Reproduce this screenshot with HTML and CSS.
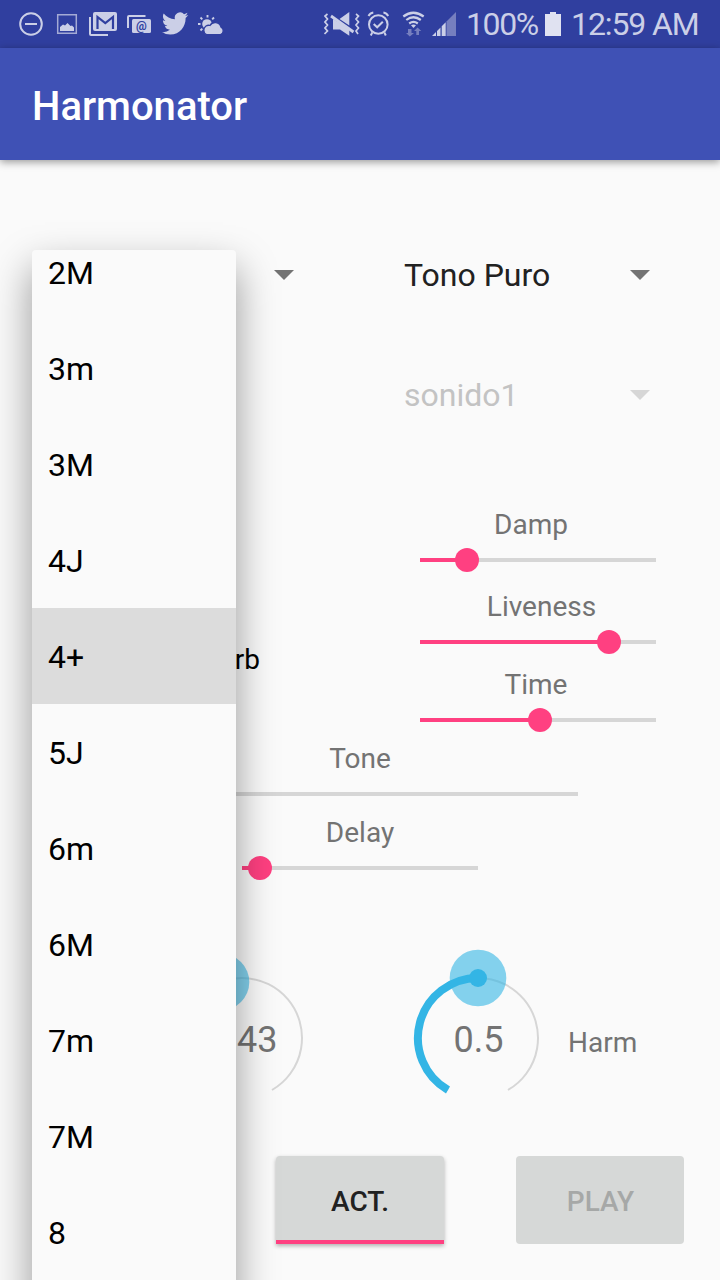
FILE: index.html
```
<!DOCTYPE html>
<html lang="es">
<head>
<meta charset="utf-8">
<title>Harmonator</title>
<link rel="stylesheet" href="styles.css">
</head>
<body>
<div class="screen">
  <div class="status">
    <svg class="icon" viewBox="0 0 36 48"><circle cx="18" cy="24" r="10.8" fill="none" stroke="currentColor" stroke-width="2"/><path d="M12 24h12" stroke="currentColor" stroke-width="2"/></svg>
    <svg class="icon" viewBox="0 0 36 48"><path d="M8.700 14.700h18.600v18.600H8.700z" fill="none" stroke="currentColor" stroke-width="1.500" opacity=".75"/><path d="M11 31v-4l3-2.500 2 1 2.500-2.500 3 3 1.500-.500 2 2V31z" fill="currentColor"/></svg>
    <svg class="icon" viewBox="0 0 36 48"><path d="M5 17v17q0 1 1 1h17" fill="none" stroke="currentColor" stroke-width="2"/><rect x="8" y="12" width="24" height="19" rx="2" fill="currentColor"/><path d="M12.500 29V17l7.800 6.200L28 17v12" fill="none" stroke="#303f9f" stroke-width="2.200"/></svg>
    <svg class="icon" viewBox="0 0 36 48"><path d="M7 28V17q0-1 1-1h16.500" fill="none" stroke="currentColor" stroke-width="2"/><rect x="11" y="19" width="19" height="14" rx="1.500" fill="currentColor"/><text class="at" x="20.500" y="29.800" text-anchor="middle">@</text></svg>
    <svg class="icon" viewBox="0 0 36 48"><path transform="translate(4.900 9.800) scale(1.100 1.140)" fill="currentColor" d="M23.950 4.570a10 10 0 0 1-2.820.780 4.960 4.960 0 0 0 2.160-2.720c-.950.550-2 .950-3.130 1.180a4.920 4.920 0 0 0-8.380 4.480C7.690 8.100 4.070 6.130 1.640 3.160a4.820 4.820 0 0 0-.670 2.480c0 1.710.870 3.210 2.190 4.100a4.900 4.900 0 0 1-2.230-.620v.060a4.920 4.920 0 0 0 3.950 4.830 5 5 0 0 1-2.210.080 4.940 4.940 0 0 0 4.600 3.420A9.870 9.870 0 0 1 0 19.540a13.990 13.990 0 0 0 7.550 2.210c9.050 0 14-7.500 14-13.980 0-.210 0-.420-.020-.630a9.940 9.940 0 0 0 2.460-2.550z"/></svg>
    <svg class="icon" viewBox="0 0 36 48"><circle cx="14" cy="24" r="4.800" fill="currentColor"/><path d="M14.500 15v2.500M7.500 17.500l1.800 1.800M21 17.500l-1.800 1.800M5 24h2.500M7.500 30.500l1.800-1.800" stroke="currentColor" stroke-width="1.900"/><path d="M13.500 34.600a5 5 0 0 1-.500-8.600 5 5 0 0 1 4-.500 6 6 0 0 1 11 1.600 4.100 4.100 0 0 1-.500 7.500z" fill="currentColor" stroke="#303f9f" stroke-width="1.300"/></svg>
    <div class="status-right">
      <svg class="icon" viewBox="0 0 36 48"><path d="M3.500 14l-2.500 2 2.500 3-2.500 3 2.500 3-2.500 3 2.500 3-3 3M32 14l2.500 2-2.500 3 2.500 3-2.500 3 2.500 3-2.500 3 2 3" fill="none" stroke="currentColor" stroke-width="1.700"/><path d="M15.500 19L25.300 12v13.600zM9 19v10.500h7l9.300 6.300V29z" fill="currentColor"/><path d="M7 16l22.500 16" stroke="currentColor" stroke-width="2.800"/></svg>
      <svg class="icon" viewBox="0 0 36 48"><g fill="none" stroke="currentColor" stroke-width="2"><circle cx="18.300" cy="24.500" r="9.300"/><path d="M13.700 24l3.500 3.300 5.600-5.600"/><path d="M8.500 16q1.500-3 4.800-3.400M28.200 16q-1.500-3-4.800-3.400M12.300 32.300l-1.500 3.200M24.300 32.300l1.500 3.200"/></g></svg>
      <svg class="icon" viewBox="0 0 36 48"><g fill="none" stroke="currentColor" stroke-width="2.200"><path d="M7.300 16.500q10-7.500 20.400 0M10.300 20q7.200-5.500 14.500 0M13.200 23.500q4.300-3.200 8.600 0"/></g><path d="M15 25.300q2.500-1.700 5 0l-2.500 2.800z" fill="currentColor"/><path d="M12 29h3.500v4H18l-4.200 3.500L10 33h2zM20.300 35v-4H18l3.500-3.500 3.800 3.500H23v4z" fill="currentColor" opacity=".45"/></svg>
      <svg class="signal" viewBox="0 0 24 48"><path d="M14.500 21.500L24 12v24h-9.500z" fill="currentColor" opacity=".45"/><path d="M0 36l4-4v4zM5 31l3.500-3.500V36H5zM9.700 26.300l4-4V36h-4z" fill="currentColor"/></svg>
      <span class="percent">100%</span>
      <svg class="battery" viewBox="0 0 16 24"><path d="M5 0h6v2h5v22H0V2h5z" fill="#e0e2f1"/></svg>
      <span class="clock">12:59 AM</span>
    </div>
  </div>
  <header class="appbar">Harmonator</header>

  <main class="content">
    <div class="spinners">
      <div class="spinner"><i class="caret"></i></div>
      <div class="spinner wide"><span>Tono Puro</span><i class="caret"></i></div>
      <div class="spinner wide off"><span>sonido1</span><i class="caret"></i></div>
    </div>

    <div class="reverb">
      <label class="check">Reverb</label>
      <div class="params">
        <div class="param"><span class="label damp">Damp</span><div class="track"><div class="fill" style="width:47px"></div></div></div>
        <div class="param"><span class="label liveness">Liveness</span><div class="track"><div class="fill" style="width:189px"></div></div></div>
        <div class="param"><span class="label time">Time</span><div class="track"><div class="fill" style="width:120px"></div></div></div>
      </div>
    </div>

    <div class="param tone"><span class="label">Tone</span><div class="track"></div></div>
    <div class="param delay"><span class="label">Delay</span><div class="track"><div class="fill" style="width:18px"></div></div></div>

    <div class="knobs">
      <div class="knob">
        <svg viewBox="0 0 140 160"><path class="ring" d="M40 142A60 60 0 1 1 100 142"/><path class="arc" d="M40 142A60 60 0 0 1 48.500 34"/><circle class="halo" cx="49" cy="34" r="28.300"/><circle class="dot" cx="49" cy="34" r="9"/></svg>
        <span class="value">0.43</span>
      </div>
      <div class="knob">
        <svg viewBox="0 0 140 160"><path class="ring" d="M40 142A60 60 0 1 1 100 142"/><path class="arc" d="M40 142A60 60 0 0 1 70 30"/><circle class="halo" cx="70" cy="30" r="28.300"/><circle class="dot" cx="70" cy="30" r="9"/></svg>
        <span class="value">0.5</span>
      </div>
      <span class="label harm">Harm</span>
    </div>

    <div class="actions">
      <button class="btn active">ACT.</button>
      <button class="btn" disabled>PLAY</button>
    </div>
  </main>

  <div class="popup">
    <ul class="menu">
      <li>2M</li><li>3m</li><li>3M</li><li>4J</li><li class="selected">4+</li><li>5J</li><li>6m</li><li>6M</li><li>7m</li><li>7M</li><li>8</li>
    </ul>
  </div>
</div>
</body>
</html>
```
FILE: styles.css
```
* { box-sizing: border-box; }
body { margin: 0; font-family: Roboto, sans-serif; background: #fafafa; }
.screen { position: relative; width: 720px; height: 1280px; overflow: hidden; background: #fafafa; }

.status { display: flex; height: 48px; padding-left: 13px; background: #303f9f; color: #cbcfe7; }
.icon { width: 36px; height: 48px; flex: none; }
.at { font: bold 12px Roboto, sans-serif; fill: #303f9f; }
.status-right { display: flex; align-items: center; margin-left: 95px; font-size: 32px; line-height: 48px; letter-spacing: -1.100px; white-space: nowrap; }
.signal { width: 24px; height: 48px; }
.percent { width: 89px; padding-left: 10px; letter-spacing: -1.400px; }
.battery { width: 16px; height: 24px; }
.clock { padding-left: 10px; }

.appbar { position: relative; height: 112px; padding: 3px 32px 0; background: #3f51b5; color: #fff; font-size: 40px; font-weight: 500; line-height: 112px; box-shadow: 0 2px 8px rgba(0,0,0,.4); }

.content { display: flex; flex-direction: column; height: 1120px; padding-top: 91px; }
.spinners { display: grid; grid-template-columns: 294px 246px; column-gap: 110px; row-gap: 72px; height: 254px; align-content: start; }
.spinner { display: flex; align-items: center; justify-content: flex-end; height: 48px; font-size: 32px; color: #212121; }
.spinner.wide { grid-column: 2; justify-content: space-between; }
.spinner.off { color: #c3c3c3; }
.caret { width: 20px; height: 10px; background: #737373; clip-path: polygon(0 0, 100% 0, 50% 100%); }
.off .caret { background: #d6d6d6; }

.reverb { display: flex; height: 234px; }
.check { width: 260px; padding-top: 139px; text-align: right; font-size: 28px; line-height: 32px; color: #000; }
.params { width: 236px; margin-left: 160px; }
.param { display: flex; flex-direction: column; }
.label { display: block; text-align: center; font-size: 28px; line-height: 40px; color: #737373; }
.params .param { height: 82px; }
.params .param + .param { height: 78px; }
.damp { margin-left: -14px; }
.liveness { margin-left: 7px; }
.time { margin-left: -4px; }
.track { height: 4px; margin-top: 13px; background: #d6d6d6; }
.fill { position: relative; height: 4px; background: #ff4081; }
.fill::after { content: ""; position: absolute; right: -12px; top: -10px; width: 24px; height: 24px; border-radius: 50%; background: #ff4081; }
.tone { height: 74px; padding: 0 142px; }
.tone .track { margin-top: 13px; }
.delay { height: 135px; padding: 0 242px; }

.knobs { display: flex; height: 208px; padding-left: 172px; gap: 96px; }
.knob { display: grid; width: 140px; height: 160px; }
.knob svg, .value { grid-area: 1 / 1; }
.value { align-self: center; text-align: center; padding: 24px 0 0 1px; font-size: 36px; line-height: 40px; color: #737373; }
.ring { fill: none; stroke: #d6d6d6; stroke-width: 2; }
.arc { fill: none; stroke: #33b5e5; stroke-width: 8; }
.halo { fill: #33b5e5; opacity: .6; }
.dot { fill: #33b5e5; }
.harm { margin-left: -76px; padding-top: 75px; }

.actions { display: flex; gap: 72px; padding-left: 276px; }
.btn { width: 168px; height: 88px; padding: 3px 0 0 1px; border: 0; border-radius: 4px; background: #d6d8d7; color: #a6a8a7; font: 500 28px/33px Roboto, sans-serif; }
.btn.active { border-bottom: 4px solid #ff4081; border-radius: 4px 4px 0 0; padding: 6px 0 0; color: #212121; box-shadow: 0 2px 4px rgba(0,0,0,.3); }

.popup { position: absolute; left: 32px; top: 250px; width: 204px; height: 1030px; }
.popup::before { content: ""; position: absolute; inset: 18px 0 -80px; box-shadow: 0 0 38px rgba(0,0,0,.4); }
.menu { position: relative; height: 1030px; margin: 0; padding: 0; overflow: hidden; display: flex; flex-direction: column; justify-content: flex-end; list-style: none; border-radius: 4px; background: #fafafa; }
.menu li { flex: none; height: 96px; padding: 1px 16px 0; font-size: 32px; line-height: 96px; color: #000; }
.menu .selected { background: #dcdcdc; }
```
